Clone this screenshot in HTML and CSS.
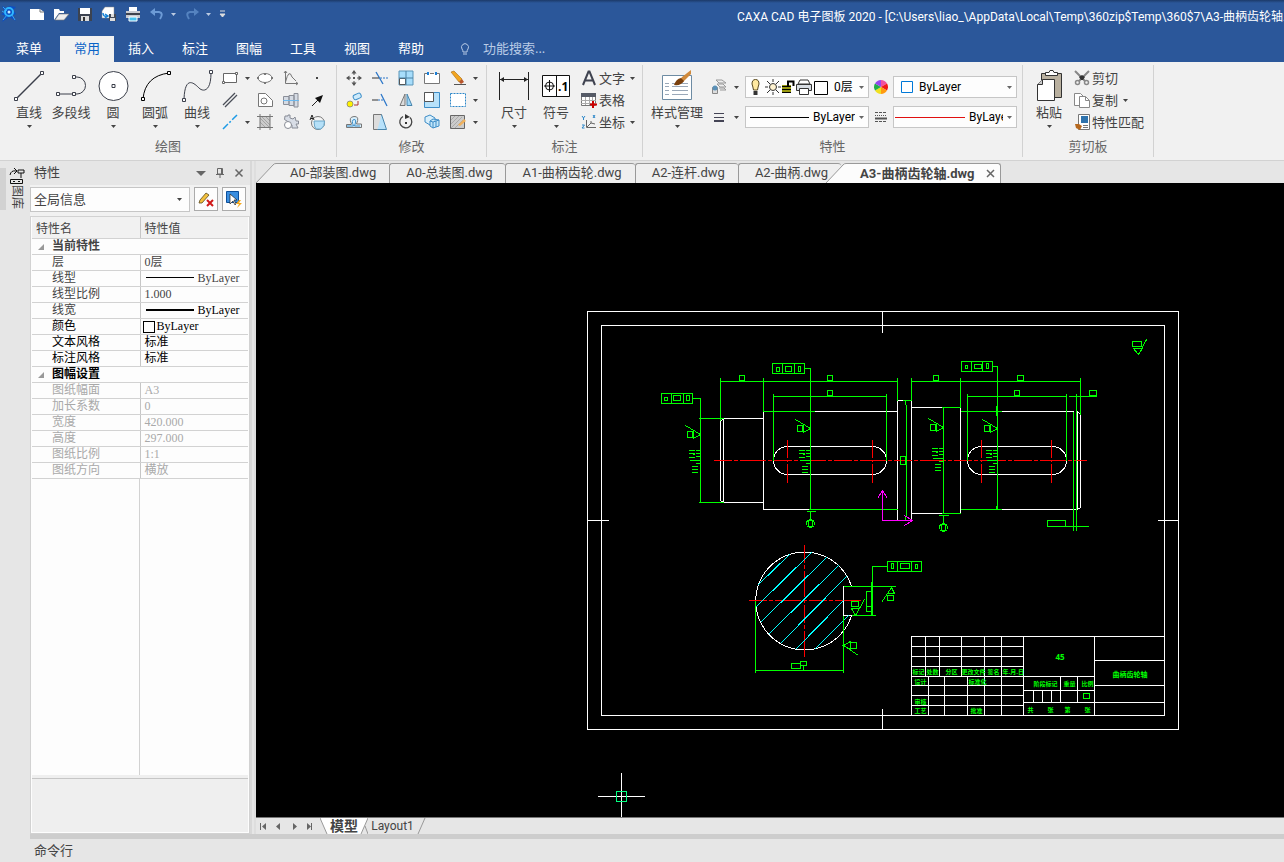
FILE: index.html
```html
<!DOCTYPE html>
<html lang="zh-CN">
  <head>
    <meta charset="UTF-8" />
    <meta name="viewport" content="width=device-width, initial-scale=1.0" />
    <title>CAXA CAD 电子图板 2020</title>
    <link rel="stylesheet" href="styles.css">
  </head>
  <body>
    <!-- 公用图形 -->
    <svg class="defs" width="0" height="0">
      <symbol id="arrow" viewBox="0 0 5 3"><path d="M0 0H5L2.5 3Z" fill="currentColor" /></symbol>
      <symbol id="rough" overflow="visible">
        <path d="M-15 -9L0 0M-7 -4V4L0 0M-13 -3H-8V3H-13Z" />
      </symbol>
      <symbol id="dimtext" overflow="visible">
        <path d="M-12 -10H-6M-12 -7H-6M-12 -3H-6M-8 -6H-6M-5 -10H0M-5 -7H0M-5 -4H0M-11 0H0M-5 3H0M-9 6H-3M-9 9H-3M-9 12H-3" />
      </symbol>
    </svg>

    <header class="top">
      <div class="titlebar flex">
        <div class="quick flex align">
          <svg class="logo" width="18" height="18" viewBox="0 0 18 18">
            <path d="M2 1L6 3 10 1 16 2 13 5 16 9 12 11 16 16 9 12 2 17 5 11 1 9 5 7Z" fill="#0b4fc4" />
            <circle cx="9" cy="7" r="4" fill="none" stroke="#2fb7ff" stroke-width="2" />
            <path d="M3 2L7 6M3 15L7 10M12 10L15 15M5 8L2 6" stroke="#36a3f5" fill="none" />
            <circle cx="9" cy="7" r="1.5" fill="#bfe8ff" />
          </svg>
          <button class="qbtn" aria-label="新建"><svg width="16" height="16" viewBox="0 0 16 16"><path d="M1 3H11L15 6V14H1Z" fill="#fff" /><path d="M11 3V6H15" fill="none" stroke="#777" /></svg></button>
          <button class="qbtn" aria-label="打开"><svg width="16" height="16" viewBox="0 0 16 16"><path d="M1 14V3H6L7 5H11V7H6Z" fill="#fff" /><path d="M2 14L6 8H16L11 14Z" fill="#eee" stroke="#777" stroke-width=".6" /></svg></button>
          <button class="qbtn" aria-label="保存"><svg width="16" height="16" viewBox="0 0 16 16"><path d="M1 2H15V15H1Z" fill="#3c4350" /><path d="M3 2H13V8H3Z" fill="#fff" /><path d="M4 10H12V15H4Z" fill="#ddd" /><path d="M6 11H8V15H6Z" fill="#333" /></svg></button>
          <button class="qbtn" aria-label="另存为"><svg width="16" height="16" viewBox="0 0 16 16"><path d="M4 1H13V12H1V5Z" fill="#fff" stroke="#888" stroke-width=".5" /><path d="M8 8H15V15H8Z" fill="#444b58" /><path d="M10 8H13V11H10ZM9 12H14V15H9Z" fill="#ddd" /><path d="M2 7Q2 11 6 10M4 8L7 10 4 12" fill="none" stroke="#1683d8" stroke-width="1.5" /></svg></button>
          <button class="qbtn" aria-label="打印"><svg width="16" height="16" viewBox="0 0 16 16"><path d="M4 1H12V5H4Z" fill="#fff" /><path d="M1 5H15V12H1Z" fill="#c9ccd2" /><path d="M1 7H15V9H1Z" fill="#3e434d" /><path d="M4 11H12V15H4Z" fill="#46c3f0" stroke="#fff" /></svg></button>
          <button class="qbtn" aria-label="撤销"><svg width="16" height="16" viewBox="0 0 16 16"><path d="M4 6H10Q15 7 11 13" fill="none" stroke="#6d9bd6" stroke-width="2" /><path d="M1 6L6 2V10Z" fill="#6d9bd6" /></svg></button>
          <svg class="qarrow" width="5" height="3"><use href="#arrow" /></svg>
          <button class="qbtn" aria-label="重做"><svg width="16" height="16" viewBox="0 0 16 16"><path d="M12 6H6Q1 7 5 13" fill="none" stroke="#5583c0" stroke-width="2" /><path d="M15 6L10 2V10Z" fill="#5583c0" /></svg></button>
          <svg class="qarrow" width="5" height="3"><use href="#arrow" /></svg>
          <svg class="qmore" width="7" height="8" viewBox="0 0 7 8"><path d="M1 1H6M1 4H6L3.500 7Z" stroke="#ddd" fill="#ddd" /></svg>
        </div>
        <h1 class="caption">CAXA CAD 电子图板 2020 - [C:\Users\liao_\AppData\Local\Temp\360zip$Temp\360$7\A3-曲柄齿轮轴.</h1>
      </div>
      <nav class="menu flex">
        <button>菜单</button>
        <button class="on">常用</button>
        <button>插入</button>
        <button>标注</button>
        <button>图幅</button>
        <button>工具</button>
        <button>视图</button>
        <button>帮助</button>
        <label class="search flex align">
          <svg width="12" height="14" viewBox="0 0 12 14"><path d="M4 10Q4 8 3 7A3.500 3.500 0 1 1 9 7Q8 8 8 10ZM4 12H8" fill="none" stroke="#b9cbe6" /></svg>
          <input type="text" placeholder="功能搜索..." aria-label="功能搜索" />
        </label>
      </nav>
    </header>

    <section class="ribbon flex">
      <div class="group draw">
        <div class="tools flex">
          <button class="big">
            <svg width="32" height="32"><path d="M3 29L29 3" stroke="#3b3f4a" stroke-width="1.5" /><path d="M1.500 27.500h3v3h-3zM27.500 1.500h3v3h-3z" fill="#fff" stroke="#3b3f4a" /></svg>
            <span>直线</span><svg class="arr" width="5" height="3"><use href="#arrow" /></svg>
          </button>
          <button class="big">
            <svg width="32" height="32"><path d="M3 24H19M19 7H22A8.500 8.500 0 0 1 22 24H19" fill="none" stroke="#3b3f4a" /><path d="M1.500 22.500h3v3h-3zM17.500 22.500h3v3h-3zM17.500 5.500h3v3h-3z" fill="#fff" stroke="#3b3f4a" /></svg>
            <span>多段线</span>
          </button>
          <button class="big">
            <svg width="32" height="32"><circle cx="16.500" cy="16" r="14.500" fill="#fff" stroke="#3b3f4a" /><path d="M15 14.500h3v3h-3z" fill="#fff" stroke="#3b3f4a" /></svg>
            <span>圆</span><svg class="arr" width="5" height="3"><use href="#arrow" /></svg>
          </button>
          <button class="big">
            <svg width="32" height="32"><path d="M4 29Q6 6 30 3" fill="none" stroke="#000" /><path d="M2.500 27.500h3v3h-3zM28.500 1.500h3v3h-3z" fill="#fff" stroke="#000" /></svg>
            <span>圆弧</span><svg class="arr" width="5" height="3"><use href="#arrow" /></svg>
          </button>
          <button class="big">
            <svg width="32" height="32"><path d="M3 29C4 4 14 14 18 18S30 22 30 3" fill="none" stroke="#3b3f4a" /><path d="M1.500 28.500h3v3h-3zM28.500 .5h3v3h-3z" fill="#fff" stroke="#3b3f4a" /></svg>
            <span>曲线</span><svg class="arr" width="5" height="3"><use href="#arrow" /></svg>
          </button>
          <div class="smalls draw-grid">
            <button class="sm" aria-label="矩形"><svg width="16" height="16"><path d="M1.500 3.500H14.500V12.500H1.500Z" fill="#fff" stroke="#666" /><path d="M.5 11.500h2v2h-2zM13.500 2.500h2v2h-2z" fill="#fff" stroke="#666" /></svg><svg class="arr" width="5" height="3"><use href="#arrow" /></svg></button>
            <button class="sm" aria-label="椭圆"><svg width="16" height="16"><ellipse cx="8" cy="8" rx="7" ry="4.500" fill="#fff" stroke="#777" /><path d="M0 7h2v2H0zM14 7h2v2h-2zM7 3h2v2H7zM7 12h2v2H7z" fill="#777" /></svg></button>
            <button class="sm" aria-label="公式曲线"><svg width="16" height="16"><path d="M2.500 1V13.500H15M2.500 12Q6 -2 9 7L13 11M1 3L2.500 1 4 3M13 12L15 13.500 13 15" fill="none" stroke="#777" /></svg></button>
            <button class="sm" aria-label="点"><svg width="16" height="16"><path d="M7 7h2v2H7z" fill="#444" /></svg></button>
            <button class="sm" aria-label="平行线"><svg width="16" height="16"><path d="M1 13L13 1M3 15L15 3" stroke="#4a4e58" stroke-width="1.300" /></svg></button>
            <button class="sm" aria-label="多边形"><svg width="16" height="16"><path d="M1.500 1.500H8.500L15.500 8.500V14.500H1.500Z" fill="#fff" stroke="#777" /><circle cx="7" cy="9" r="3" fill="none" stroke="#777" /></svg></button>
            <button class="sm" aria-label="轴"><svg width="16" height="16"><path d="M.5 4.500H6V12.500H.5ZM6 3.500H11V13.500H6ZM11 1.500H15V15H11Z" fill="#d5dbe4" stroke="#8a8e98" /><path d="M0 8.500H16" stroke="#6bb8ee" /></svg></button>
            <button class="sm" aria-label="箭头"><svg width="16" height="16"><path d="M3 14L9 8" stroke="#222" /><path d="M14 3L11 11 6 6Z" fill="#111" /></svg></button>
            <button class="sm" aria-label="中心线"><svg width="16" height="16"><path d="M1 15L15 1" stroke="#1d9be6" stroke-width="1.500" stroke-dasharray="7 2 2 2" /></svg><svg class="arr" width="5" height="3"><use href="#arrow" /></svg></button>
            <button class="sm" aria-label="剖面线"><svg width="16" height="16"><path d="M3 3H13V13H3Z" fill="#ccc" /><path d="M3 4L12 13M5 3L13 11M3 8L8 13M9 3L13 7" stroke="#999" fill="none" stroke-width=".8" /><path d="M3 0V16M13 0V16M0 2.500H16M0 13.500H16" stroke="#777" fill="none" /></svg></button>
            <button class="sm" aria-label="齿轮"><svg width="16" height="16"><path d="M1.500 5.500L2 2H5V1H7V4L10 5 12 3 13 7H15.500V10H13L15 14H9V11L4 7Z" fill="#d8dde6" stroke="#888c96" /><circle cx="5" cy="11" r="3.500" fill="#fff" stroke="#888c96" /></svg></button>
            <button class="sm" aria-label="局部放大"><svg width="16" height="16"><circle cx="9" cy="9" r="6.500" fill="#f5f5f5" stroke="#777" /><path d="M5 7H15.500Q16 12 12 15H7Q5 13 5 7Z" fill="#b5e0f8" stroke="#6aa6c8" /><path d="M1 6L3 1 5 6M2 4.500H4" fill="none" stroke="#222" /></svg></button>
          </div>
        </div>
        <div class="gname">绘图</div>
      </div>

      <div class="group modify">
        <div class="tools flex">
          <div class="smalls modify-grid">
            <button class="sm" aria-label="移动"><svg width="16" height="16"><path d="M8 1V5M8 11V15M1 8H5M11 8H15" stroke="#555" /><path d="M8 0L10.500 3.500H5.500ZM8 16L10.500 12.500H5.500ZM0 8L3.500 5.500V10.500ZM16 8L12.500 5.500V10.500ZM7 7h2v2H7z" fill="#555" /></svg></button>
            <button class="sm" aria-label="裁剪"><svg width="16" height="16"><path d="M4 2L11 14" stroke="#2a76c9" stroke-width="1.300" /><path d="M0 8H7" stroke="#333" /><path d="M8 8H16" stroke="#2a76c9" stroke-dasharray="2 1" /></svg></button>
            <button class="sm" aria-label="阵列"><svg width="16" height="16"><path d="M1 1H15V15H1Z" fill="#a7ddfb" stroke="#5b95b8" /><path d="M1.500 8.500H7.500V14.500H1.500Z" fill="#fff" stroke="#555" /><path d="M8 1V15M1 8H15" stroke="#4a80a3" /></svg></button>
            <button class="sm" aria-label="打断"><svg width="16" height="16"><path d="M4 3.500H.5V13.500H15.500V3.500H12M6 3.500H10" fill="#fff" stroke="#777" /><path d="M3 2h2v3H3zM11 2h2v3h-2z" fill="#1c7fd6" /></svg></button>
            <button class="sm" aria-label="删除"><svg width="16" height="16"><path d="M1 2L4 1 12 9 9 12Z" fill="#f2a51f" stroke="#a86a12" stroke-width=".6" /><path d="M9 12L12 9 14 12 11 14Z" fill="#b9562c" /><path d="M4 14.500H16" stroke="#555" /></svg></button>
            <svg class="arr" width="5" height="3"><use href="#arrow" /></svg>
            <button class="sm" aria-label="复制"><svg width="16" height="16"><circle cx="4" cy="12" r="3" fill="#fff200" stroke="#777" stroke-width=".7" /><rect x="7" y="2" width="8" height="5" rx="2" transform="rotate(-25 11 4)" fill="#cdeafb" stroke="#3d8fc9" /><path d="M8 13H12V9" fill="none" stroke="#a33" /></svg></button>
            <button class="sm" aria-label="延伸"><svg width="16" height="16"><path d="M9 2L15 14" stroke="#2a76c9" stroke-width="1.300" /><path d="M0 8H6" stroke="#333" /><path d="M6 8H11" stroke="#2a76c9" stroke-dasharray="2 1" /></svg></button>
            <button class="sm" aria-label="镜像"><svg width="16" height="16"><path d="M7 2V13.500H2Z" fill="#ddd" stroke="#777" /><path d="M9 2V13.500H14Z" fill="#9dd6f7" stroke="#4a86ad" /></svg></button>
            <button class="sm" aria-label="缩放"><svg width="16" height="16"><path d="M.5 .5H15.500V15.500H.5Z" fill="#b7e1fa" stroke="#3e8dc7" /><path d="M.5 .5H9.500V9.500H.5Z" fill="#fff" stroke="#555" /></svg></button>
            <button class="sm" aria-label="选择框"><svg width="16" height="16"><path d="M.5 1.500H15.500V14.500H.5Z" fill="#fff" stroke="#2a86c9" stroke-dasharray="2 1" /></svg></button>
            <svg class="arr" width="5" height="3"><use href="#arrow" /></svg>
            <button class="sm" aria-label="偏移"><svg width="16" height="16"><path d="M5.500 10Q2 3 8 2.500T10.500 10H15.500V13.500H.5V10.500H5.500" fill="#d9effb" stroke="#777" /><path d="M1 12H7.500Q5 6 8 5.500T8.500 12H14" stroke="#3d8fc9" fill="none" /></svg></button>
            <button class="sm" aria-label="拉伸"><svg width="16" height="16"><path d="M1.500 .5H9.500V15.500H1.500Z" fill="#ddd" stroke="#777" /><path d="M9.500 .5L14.500 15.500H5.500" fill="#b7e1fa" stroke="#4a86ad" /></svg></button>
            <button class="sm" aria-label="旋转"><svg width="16" height="16"><path d="M12 3.500A6 6 0 1 1 5 2.500" fill="none" stroke="#444" stroke-width="1.300" /><path d="M7 0V5L12 3Z" fill="#333" /><path d="M7 8h2v2H7z" fill="#333" /></svg></button>
            <button class="sm" aria-label="分解"><svg width="16" height="16"><path d="M1 3L6 1 11 4V9L6 11 1 8Z" fill="#d9effb" stroke="#3e8dc7" /><path d="M6 7L9 5 15 6V12L9 14 6 12ZM9 8V14M6 7L9 8 15 6M12 7V13" fill="#c2e6fa" stroke="#3e8dc7" /></svg></button>
            <button class="sm" aria-label="编辑填充"><svg width="16" height="16"><path d="M.5 1.500H14.500V14.500H.5Z" fill="#ccc" stroke="#666" /><path d="M1 6L5 2M1 10L9 2M1 14L12 3M5 14L13 6" stroke="#aaa" /><path d="M8 11L14 5 16 7 10 12Z" fill="#f0b25e" /></svg></button>
            <svg class="arr" width="5" height="3"><use href="#arrow" /></svg>
          </div>
        </div>
        <div class="gname">修改</div>
      </div>

      <div class="group note">
        <div class="tools flex">
          <button class="big">
            <svg width="32" height="32"><path d="M1.500 2V30M30.500 2V30M2 9.500H30" stroke="#222" /><path d="M2 9.500L6 7V12ZM30 9.500L26 7V12Z" fill="#222" /></svg>
            <span>尺寸</span><svg class="arr" width="5" height="3"><use href="#arrow" /></svg>
          </button>
          <button class="big">
            <svg width="32" height="32"><path d="M2.500 5.500H29.500V26.500H2.500Z" fill="#fff" stroke="#111" /><path d="M16.500 5V26M4 16H15M9.500 10V22" stroke="#111" /><circle cx="9.500" cy="16" r="4" fill="none" stroke="#111" /><text x="18" y="21" class="tolerance">.1</text></svg>
            <span>符号</span><svg class="arr" width="5" height="3"><use href="#arrow" /></svg>
          </button>
          <div class="lines">
            <button class="line"><svg width="16" height="16"><path d="M2 15L7.500 1.500H8.500L14 15M4 10.500H12" fill="none" stroke="#3f4350" stroke-width="2" /></svg><span>文字</span><svg class="arr" width="5" height="3"><use href="#arrow" /></svg></button>
            <button class="line"><svg width="16" height="16"><path d="M.5 1.500H14.500V13.500H.5Z" fill="#fff" stroke="#777" /><path d="M0 1H15V5H0Z" fill="#555a66" /><path d="M0 8.500H15M0 11.500H15M4.500 5V13M8.500 5V13M11.500 5V13" stroke="#aaa" /><path d="M12 9V16M9 12.500H16" stroke="#c00" stroke-width="2" /></svg><span>表格</span></button>
            <button class="line"><svg width="16" height="16"><path d="M5.500 6V13.500H15M6 13L10 9V7M10 9L14 10" fill="none" stroke="#666" /><path d="M1 2L2.500 4L4 2M2.500 4V6M12 1L14 4M14 1L12 4M1 11H3.500L1 14H3.500" fill="none" stroke="#2a86c9" /></svg><span>坐标</span><svg class="arr" width="5" height="3"><use href="#arrow" /></svg></button>
          </div>
        </div>
        <div class="gname">标注</div>
      </div>

      <div class="group props">
        <div class="tools flex">
          <button class="big wide">
            <svg width="32" height="32"><path d="M1.500 5.500H30.500V29.500H1.500Z" fill="#fff" stroke="#6d8ba3" /><path d="M4 13.500H8M4 16.500H8M4 20.500H8M4 24.500H8M11 13.500H27M11 16.500H27M11 20.500H27M11 24.500H27" stroke="#9aa8b8" /><path d="M30 0L21 7 18 11 22 12 30 4Z" fill="#d08a3c" /><path d="M20 8Q15 9 13 15Q20 16 23 11Z" fill="#7a3f0c" /></svg>
            <span>样式管理</span><svg class="arr" width="5" height="3"><use href="#arrow" /></svg>
          </button>
          <div class="prop-grid">
            <button class="sm left" aria-label="图层"><svg width="16" height="16"><path d="M5 1H11L15 4H8ZM6 5H12L15 8H9ZM8 9H13L15 11H9" fill="#eee" stroke="#999" /><path d="M1.500 8.500H6.500V14.500H1.500Z" fill="#ddd" stroke="#888" /><circle cx="4" cy="9" r="2.500" fill="#5b91b8" /></svg><svg class="arr" width="5" height="3"><use href="#arrow" /></svg></button>
            <div class="combo flex align">
              <svg class="layer-icons" width="80" height="18">
                <path d="M2 6A3.500 4.500 0 1 1 9 6Q8 9 7.500 12H3.500Q3 9 2 6Z" fill="#ffe9a0" stroke="#5a4a20" /><path d="M3.500 13H7.500V17H3.500Z" fill="#333" />
                <circle cx="23" cy="9" r="3.500" fill="#fff3d0" stroke="#333" /><path d="M23 1V4M23 14V17M15 9H18M28 9H31M17 3L20 6M26 12L29 15M29 3L26 6M20 12L17 15" stroke="#333" />
                <path d="M32 7H41V15H32Z" fill="#9a9a12" /><path d="M32 8.500H41M32 11.500H41M32 14.500H41" stroke="#000" /><path d="M38 8V3.500H43.500V8" fill="none" stroke="#000" stroke-width="2" />
                <path d="M50 2H58L60 6H48Z" fill="#fff" stroke="#333" /><path d="M46.500 6.500H61.500V12.500H46.500Z" fill="#d8dde3" stroke="#333" /><path d="M49.500 10.500H58.500V16.500H49.500Z" fill="#fff" stroke="#333" />
                <path d="M64.500 3.500H77.500V16.500H64.500Z" fill="#fff" stroke="#000" />
              </svg>
              <select aria-label="图层"><option>0层</option></select>
              <svg class="arr" width="5" height="3"><use href="#arrow" /></svg>
            </div>
            <svg class="mid" width="14" height="14" viewBox="-7 -7 14 14">
              <path d="M0 0L0 -7A7 7 0 0 1 6 -3.500Z" fill="#f050a0" /><path d="M0 0L6 -3.500A7 7 0 0 1 6 3.500Z" fill="#f01818" /><path d="M0 0L6 3.500A7 7 0 0 1 0 7Z" fill="#ff9a10" /><path d="M0 0L0 7A7 7 0 0 1 -6 3.500Z" fill="#f0e020" /><path d="M0 0L-6 3.500A7 7 0 0 1 -6 -3.500Z" fill="#22b04a" /><path d="M0 0L-6 -3.500A7 7 0 0 1 0 -7Z" fill="#9548f0" />
            </svg>
            <div class="combo flex align">
              <svg class="swatch" width="12" height="12"><path d="M.5 .5H11.500V11.500H.5Z" fill="#fff" stroke="#0078d7" /></svg>
              <select aria-label="颜色"><option>ByLayer</option></select>
              <svg class="arr" width="5" height="3"><use href="#arrow" /></svg>
            </div>
            <button class="sm left" aria-label="线宽"><svg width="16" height="16"><path d="M3 4.500H13M3 8.500H13" stroke="#445" /><path d="M3 12H13" stroke="#445" stroke-width="2" /></svg><svg class="arr" width="5" height="3"><use href="#arrow" /></svg></button>
            <div class="combo flex align">
              <i class="stroke"></i>
              <select aria-label="线宽"><option>ByLayer</option></select>
              <svg class="arr" width="5" height="3"><use href="#arrow" /></svg>
            </div>
            <svg class="mid" width="12" height="12"><path d="M0 1.500H12M0 10.500H12" stroke="#555" stroke-dasharray="3 1" /><path d="M0 4.500H12" stroke="#555" stroke-dasharray="1 1" /><path d="M0 7.500H12" stroke="#555" stroke-width="2" /></svg>
            <div class="combo flex align linetype">
              <i class="stroke red"></i>
              <select aria-label="线型"><option>ByLayer</option></select>
              <svg class="arr" width="5" height="3"><use href="#arrow" /></svg>
            </div>
          </div>
        </div>
        <div class="gname">特性</div>
      </div>

      <div class="group clip">
        <div class="tools flex">
          <button class="big">
            <svg width="32" height="32"><path d="M8.500 3.500H28.500V27.500H8.500Z" fill="#b9b09f" stroke="#333" /><path d="M12.500 5.500V2.500H16L17 .5H20L21 2.500H24.500V5.500Z" fill="#fff" stroke="#333" /><path d="M4.500 14.500L9.500 9.500H21.500V30.500H4.500Z" fill="#fff" stroke="#333" /><path d="M4.500 14.500H9.500V9.500" fill="#ccc" stroke="#333" /></svg>
            <span>粘贴</span><svg class="arr" width="5" height="3"><use href="#arrow" /></svg>
          </button>
          <div class="lines">
            <button class="line"><svg width="16" height="16"><path d="M1 1L11 11M15 1L5 11" stroke="#888" stroke-width="2" /><path d="M5 7L8 5 11 7 9 10H7Z" fill="#333" /><circle cx="3.500" cy="12.500" r="2" fill="none" stroke="#888" stroke-width="1.500" /><circle cx="12.500" cy="12.500" r="2" fill="none" stroke="#888" stroke-width="1.500" /></svg><span>剪切</span></button>
            <button class="line"><svg width="16" height="16"><path d="M.5 1.500H6.500L9.500 4.500V13.500H.5Z" fill="#fff" stroke="#888" /><path d="M5.500 4.500H11.500L15.500 8.500V15.500H5.500Z" fill="#fff" stroke="#888" /><path d="M11.500 4.500V8.500H15.500" fill="none" stroke="#888" /></svg><span>复制</span><svg class="arr" width="5" height="3"><use href="#arrow" /></svg></button>
            <button class="line"><svg width="16" height="16"><path d="M4.500 .5H15.500V15.500H4.500Z" fill="#fff" stroke="#777" /><path d="M7 2H14V9H7Z" fill="#2f73ad" /><path d="M9 11.500H14M9 13.500H14" stroke="#777" /><path d="M1 10L5 10 8 12 6 16 2 14Z" fill="#b5681e" /></svg><span>特性匹配</span></button>
          </div>
        </div>
        <div class="gname">剪切板</div>
      </div>
    </section>

    <main class="work flex">
      <div class="dock">
        <button class="docktab">
          <svg width="16" height="17"><path d="M1 7Q2 2 7 3M5 0L8 3 5 6M9 2H15V5H9ZM12 5V10M1.500 11.500H13.500V15.500H1.500Z" fill="none" stroke="#111" /><path d="M4 13.500H6M9 13.500H11" stroke="#111" /></svg>
          <span>图库</span>
        </button>
      </div>

      <div class="side flex column">
        <aside class="panel flex column">
          <div class="panel-head flex align">
            <h2>特性</h2>
            <button aria-label="菜单"><svg width="10" height="10"><path d="M0 3H10L5 8Z" fill="#666" /></svg></button>
            <button aria-label="固定"><svg width="10" height="10"><path d="M2.500 .5H7.500V6H2.500ZM1 6.500H9M5 7V10" fill="none" stroke="#666" /><path d="M6.500 1V6" stroke="#666" /></svg></button>
            <button aria-label="关闭"><svg width="10" height="10"><path d="M1.500 1.500L8.500 8.500M8.500 1.500L1.500 8.500" stroke="#666" stroke-width="1.500" /></svg></button>
          </div>
          <div class="panel-bar flex">
            <div class="picker flex align">
              <select aria-label="对象"><option>全局信息</option></select>
              <svg class="arr" width="5" height="3"><use href="#arrow" /></svg>
            </div>
            <button class="tool" aria-label="取消选择"><svg width="18" height="18"><path d="M2 13L3 10 9 3 12 5 5 13Z" fill="#f3c03c" stroke="#5a4a20" stroke-width=".8" /><path d="M10 10L16 16M16 10L10 16" stroke="#d01818" stroke-width="2" /></svg></button>
            <button class="tool" aria-label="快速选择"><svg width="18" height="18"><path d="M1.500 1.500H13.500V12.500H1.500Z" fill="#3a8ee0" stroke="#0b4f9c" /><path d="M5 4V14L8 11 10 15 11 14 9 10H12Z" fill="#fff" stroke="#222" stroke-width=".7" /><path d="M14 10L11 14H14L12 18 17 13H14L16 10Z" fill="#f5a81c" /></svg></button>
          </div>
          <div class="sheet flex column">
            <table>
              <thead><tr><th>特性名</th><th>特性值</th></tr></thead>
              <tbody>
                <tr class="sec"><th colspan="2"><svg width="6" height="6"><path d="M6 0V6H0Z" fill="#999" /></svg>当前特性</th></tr>
                <tr><td>层</td><td>0层</td></tr>
                <tr><td>线型</td><td><i class="thin"></i>ByLayer</td></tr>
                <tr><td>线型比例</td><td>1.000</td></tr>
                <tr><td>线宽</td><td class="ink"><i class="thick"></i>ByLayer</td></tr>
                <tr class="ink"><td>颜色</td><td class="color"><i class="box"></i>ByLayer</td></tr>
                <tr class="ink"><td>文本风格</td><td>标准</td></tr>
                <tr class="ink"><td>标注风格</td><td>标准</td></tr>
                <tr class="sec ink"><th colspan="2"><svg width="6" height="6"><path d="M6 0V6H0Z" fill="#999" /></svg>图幅设置</th></tr>
                <tr class="off"><td>图纸幅面</td><td>A3</td></tr>
                <tr class="off"><td>加长系数</td><td>0</td></tr>
                <tr class="off"><td>宽度</td><td>420.000</td></tr>
                <tr class="off"><td>高度</td><td>297.000</td></tr>
                <tr class="off"><td>图纸比例</td><td>1:1</td></tr>
                <tr class="off"><td>图纸方向</td><td>横放</td></tr>
              </tbody>
            </table>
            <div class="blank flex"><div></div></div>
            <div class="tip"></div>
          </div>
        </aside>
      </div>

      <div class="split"></div>

      <div class="doc flex column">
        <div class="doctabs flex">
          <svg class="slant" width="20" height="20"><path d="M0 20L17 2Q18 .5 20 .5V20Z" fill="#efefef" /><path d="M0 20L17 2Q18 .5 20 .5" fill="none" stroke="#999" /></svg>
          <button class="first">A0-部装图.dwg</button>
          <button>A0-总装图.dwg</button>
          <button>A1-曲柄齿轮.dwg</button>
          <button>A2-连杆.dwg</button>
          <button>A2-曲柄.dwg</button>
          <svg class="slant cur" width="20" height="20"><path d="M0 20L17 2Q18 .5 20 .5V20Z" fill="#fcfcfc" /><path d="M0 20L17 2Q18 .5 20 .5" fill="none" stroke="#999" /></svg>
          <button class="first cur">A3-曲柄齿轮轴.dwg<svg width="9" height="9"><path d="M1 1L8 8M8 1L1 8" stroke="#666" stroke-width="1.500" /></svg></button>
        </div>

        <svg class="canvas">
          <g transform="translate(-255.500 -182.500)" fill="none" shape-rendering="crispEdges">
            <!-- 图框 -->
            <g stroke="#fff">
              <path d="M587 311H1178V729H587ZM601 325H1164V715H601ZM882 311V332M882 708V729M587 520H608M1157 520H1178" />
              <!-- 轴 -->
              <path d="M723 418L720 421V500L723 502ZM723 418H763M723 502H763M763 411V509M814 411H897M763 509H808M897 400V520M897 400H902M911 400V520M911 407H941M911 513H941M960 407V513M1001 411H1073M1001 509H1077M1077 411V509M1077 411L1080 414V507L1077 509" />
              <rect x="773" y="446" width="113" height="28" rx="14" />
              <rect x="967" y="446" width="99" height="28" rx="14" />
              <!-- 剖面 -->
              <path d="M851 586H843V615H851M851 586A49 49 0 1 0 851 615" />
              <!-- 标题栏 -->
              <path d="M911 715V636H1164M925 636V676M939 636V676M961 636V676M984 636V715M1001 636V715M1023 636V715M1094 636V715M928 676V715M944 676V715M967 676V715" />
              <path d="M911 646H1023M911 656H1023M911 666H1023M911 676H1094M911 685H1023M911 695H1023M911 705H1023M1023 690H1094M1023 702H1164M1060 676V702M1077 676V702M1033 690V702M1042 690V702M1051 690V702M1094 660H1164M1094 685H1164" />
              <!-- 十字光标 -->
              <path d="M597 796H644M621 772V817" />
            </g>
            <path d="M616 791H626V801H616Z" stroke="#00ff80" />
            <g stroke="#f00">
              <path d="M713 460H1086M748 600H861M804 544V658" stroke-dasharray="18 2 4 2 26 2 4 2" />
              <path d="M787 439V482M872 439V482M981 439V482M1051 439V482" stroke-dasharray="18 2 2 2 20" />
            </g>
            <path stroke="#0ff" d="M757 585L789 554M755 607L811 552M760 622L826 557M768 634L838 565M780 643L846 576M795 649L843 600M814 649L848 615" />
            <g stroke="#0f0">
              <path d="M720 381H897M911 381H1080M720 377V420M763 377V411M897 377V400M911 377V400M960 377V407M1080 377V414" />
              <path d="M773 396H886M773 393V460M886 393V460M967 396H1066M967 393V460M1066 393V460M1068 396H1096M763 411H814M808 509H897M902 400H911M941 407H960M941 513H960M960 411H1001M960 509H1001" />
              <path d="M739 375H744V380H739ZM827 375H832V380H827ZM933 375H938V380H933ZM1017 375H1023V380H1017ZM827 390H832V395H827ZM1014 390H1019V395H1014ZM1089 390H1096V395H1089Z" />
              <path d="M772 363H804V373H772ZM782 363V373M794 363V373M776 367H779V371H776ZM785 366H791V371H785ZM798 366H800V371H798ZM804 368H810V509" />
              <path d="M961 361H992V371H961ZM971 361V371M982 361V371M965 365H967V368H965ZM974 364H981V368H974ZM986 363H988V368H986ZM992 366H997V509M996 405V415M996 505V509" />
              <path d="M661 393H692V403H661ZM671 393V403M683 393V403M664 397H667V400H664ZM673 395H680V400H673ZM686 395H689V400H686ZM692 398H700V502M698 418H723M698 502H723" />
              <path d="M806 511H815M810 511V519M808 520H812V526H808ZM943 407V513M938 515H948M943 515V523M941 524H945V530H941Z" />
              <circle cx="810" cy="523" r="4" /><circle cx="943" cy="527" r="4" />
              <path d="M900 456H905V464H900ZM906 404V516M905 400V404M905 516V520M1073 411V530M1076 393V530M1047 520H1065V526H1047ZM1065 526H1088" />
              <path d="M1132 341H1141V346H1132ZM1133 348H1142L1138 354ZM1138 354L1146 339" />
              <path d="M755 600V672M843 615V672M755 670H843M791 663H800V668H791ZM800 661H806V665H800ZM803 665V670" />
              <path d="M887 561H921V571H887ZM897 561V571M911 561V571M891 563H893V568H891ZM900 563H909V568H900ZM915 564H917V568H915ZM887 566H872V615M871 581V615M843 586H895M851 615H875M866 591H871V611H866ZM866 606H871" />
              <path d="M851 601H858V606H851ZM851 608H859L855 615ZM855 615L864 599M887 595H893V600H887ZM887 593H894L891 587ZM891 587L881 602M850 642H856V648H850ZM843 645L850 641V649ZM843 645L858 655M1083 693H1089V698H1083Z" />
              <use href="#rough" x="700" y="434" /><use href="#rough" x="810" y="428" /><use href="#rough" x="943" y="427" /><use href="#rough" x="997" y="428" />
              <use href="#dimtext" x="700" y="460" /><use href="#dimtext" x="810" y="460" /><use href="#dimtext" x="943" y="458" /><use href="#dimtext" x="997" y="460" />
            </g>
            <path stroke="#f0f" d="M882 490V520H912M877 498L882 490 887 498M904 515L912 520 904 525" />
            <g class="block-text">
              <text x="912" y="673">标记</text><text x="926" y="673">处数</text><text x="945" y="673">分区</text><text x="961" y="673">更改文件</text><text x="987" y="673">签名</text><text x="1002" y="673">年.月.日</text>
              <text x="914" y="683">设计</text><text x="968" y="683">标准化</text><text x="914" y="703">审核</text><text x="914" y="712">工艺</text><text x="970" y="712">批准</text>
              <text x="1033" y="685">阶段标记</text><text x="1063" y="685">重量</text><text x="1081" y="685">比例</text>
              <text x="1027" y="711">共</text><text x="1047" y="711">张</text><text x="1064" y="711">第</text><text x="1084" y="711">张</text>
              <text x="1055" y="659" class="l">45</text><text x="1112" y="676" class="m">曲柄齿轮轴</text>
            </g>
          </g>
        </svg>

        <div class="sheets flex">
          <svg class="nav" width="64" height="16"><path d="M4.500 5V12M55.500 5V12" stroke="#666" /><path d="M10 5V12L6 8.500ZM24 5V12L20 8.500ZM37 5V12L41 8.500ZM51 5V12L55 8.500Z" fill="#666" /></svg>
          <svg width="8" height="16"><path d="M0 0L7 16H8V0Z" fill="#fff" /><path d="M0 0L7 16" stroke="#999" /></svg>
          <button class="model">模型</button>
          <svg width="8" height="16"><path d="M8 0L1 16H0V0Z" fill="#fff" /><path d="M8 0L1 16M5 8L8 16" stroke="#999" /></svg>
          <button class="layout">Layout1</button>
          <svg width="9" height="16"><path d="M8 0L1 16" stroke="#999" /></svg>
        </div>
      </div>
    </main>

    <footer class="command">命令行</footer>
  </body>
</html>
```
FILE: styles.css
```css
* {
  margin: 0;
  padding: 0;
  box-sizing: border-box;
}
body {
  display: flex;
  flex-direction: column;
  height: 100vh;
  overflow: hidden;
  background-color: #e6e6e6;
  color: #444;
  font-family: "Open Sans", "Noto Sans CJK SC", sans-serif;
  font-size: 13px;
}
button,
select,
input {
  font: inherit;
  color: inherit;
  border: none;
  background: none;
}
select {
  appearance: none;
  outline: none;
}
svg {
  display: block;
  flex: none;
}
.defs {
  position: absolute;
}
.flex {
  display: flex;
}
.align {
  align-items: center;
}
.column {
  flex-direction: column;
}

/* 标题栏 */
.top {
  background-color: #2b579a;
  background-image: linear-gradient(#1c3a69, #2b579a 3px);
  color: #fff;
}
.titlebar {
  height: 36px;
}
.quick {
  width: 57.4%;
  height: 28px;
  flex: none;
}
.quick .logo {
  margin-right: 9px;
}
.qbtn {
  width: 16px;
  height: 16px;
  margin: 0 6px 0 2px;
}
.qarrow {
  margin-right: 6px;
  color: #bccbe2;
}
.qmore {
  margin-left: 2px;
}
.caption {
  flex: 1;
  font-family: Roboto, "Noto Sans CJK SC", sans-serif;
  font-size: 12px;
  font-weight: normal;
  line-height: 34px;
  white-space: nowrap;
  overflow: hidden;
}

.menu {
  height: 26px;
  padding-left: 6px;
}
.menu button {
  width: 54px;
  height: 26px;
  padding-bottom: 2px;
  line-height: 22px;
}
.menu button:first-child {
  width: 46px;
  margin-right: 8px;
}
.menu .on {
  background-color: #f1f1f1;
  color: #0a64c8;
}
.search {
  margin-left: 21px;
  gap: 12px;
}
.search input {
  width: 120px;
  height: 24px;
  padding-bottom: 2px;
  outline: none;
}
.search input::placeholder {
  color: #b9cbe6;
}

/* 功能区 */
.ribbon {
  height: 99px;
  padding-top: 3px;
  background-color: #f1f1f1;
  border-bottom: 1px solid #d2d2d2;
}
.group {
  height: 92px;
  border-right: 1px solid #d2d2d2;
}
.tools {
  height: 70px;
  padding-top: 2px;
}
.gname {
  line-height: 23px;
  text-align: center;
  color: #666;
}
.draw {
  width: 337px;
}
.draw .tools {
  padding-left: 8px;
}
.modify {
  width: 150px;
}
.modify .tools {
  padding-left: 4px;
}
.note {
  width: 156px;
}
.note .tools {
  padding-left: 6px;
}
.props {
  width: 380px;
}
.props .tools {
  padding-left: 6px;
}
.clip {
  width: 131px;
}
.clip .tools {
  padding-left: 5px;
}
.big {
  display: flex;
  flex-direction: column;
  align-items: center;
  width: 42px;
  padding-top: 3px;
  white-space: nowrap;
}
.big span {
  line-height: 20px;
}
.big .arr {
  margin-top: 3px;
}
.wide {
  width: 56px;
}
.arr {
  color: #444;
}
.tolerance {
  font-size: 12px;
  font-weight: bold;
}
.smalls {
  display: grid;
  grid-auto-rows: 22px;
  align-items: center;
  justify-items: center;
}
.draw-grid {
  grid-template-columns: 35px 26px 26px 26px;
  justify-items: start;
  padding-left: 4px;
}
.modify-grid {
  grid-template-columns: repeat(5, 26px) 9px;
}
.sm {
  display: flex;
  align-items: center;
  gap: 7px;
}
.lines {
  display: flex;
  flex-direction: column;
  padding-left: 4px;
}
.line {
  display: flex;
  align-items: center;
  gap: 2px;
  height: 22px;
  white-space: nowrap;
}
.line span {
  padding-bottom: 2px;
}
.line .arr {
  margin-left: 3px;
}
.prop-grid {
  display: grid;
  grid-template-columns: 40px 124px 24px 124px;
  grid-auto-rows: 22px;
  row-gap: 8px;
  align-items: center;
  align-content: start;
  padding-top: 9px;
}
.prop-grid .left {
  justify-self: center;
}
.prop-grid .mid {
  justify-self: center;
}
.combo {
  height: 22px;
  padding: 0 4px;
  gap: 4px;
  border: 1px solid #c6c6c6;
  background-color: #fdfdfd;
  color: #000;
  font-family: Roboto, "Noto Sans CJK SC", sans-serif;
  font-size: 12px;
}
.combo select {
  flex: 1;
  min-width: 0;
  height: 18px;
}
.combo .arr {
  color: #666;
}
.swatch {
  margin: 0 2px 0 3px;
}
.stroke {
  flex: none;
  width: 59px;
  height: 1px;
  background-color: #000;
}
.linetype {
  padding-left: 1px;
}
.combo .red {
  width: 70px;
  background-color: #e01010;
}

/* 左侧 */
.work {
  flex: 1;
  min-height: 0;
}
.dock {
  width: 30px;
  padding-top: 7px;
}
.docktab {
  display: flex;
  flex-direction: column;
  align-items: center;
  width: 28px;
  height: 42px;
  border-left: 6px solid #d2d2d2;
}
.docktab span {
  writing-mode: vertical-rl;
  text-orientation: sideways;
  font-size: 12px;
  line-height: 16px;
}
.side {
  width: 220px;
}
.panel {
  flex: 1;
  min-height: 0;
}
.panel-head {
  height: 24px;
  padding: 0 6px 0 4px;
  gap: 9px;
}
.panel-head h2 {
  flex: 1;
  padding-bottom: 3px;
  font-size: 13px;
  font-weight: normal;
}
.panel-bar {
  height: 31px;
  padding-top: 2px;
  gap: 4px;
  background-color: #f1f1f1;
}
.picker {
  width: 160px;
  height: 25px;
  padding: 0 7px 0 3px;
  border: 1px solid #c6c6c6;
  background-color: #fdfdfd;
}
.picker select {
  flex: 1;
  padding-bottom: 2px;
}
.tool {
  display: flex;
  align-items: center;
  justify-content: center;
  width: 24px;
  height: 24px;
  border: 1px solid #ababab;
  background-color: #fdfdfd;
}
.sheet {
  flex: 1;
  min-height: 0;
  padding: 0 1px;
  border: 1px solid #d2d2d2;
  background-color: #fdfdfd;
  font-family: "Liberation Serif", "Noto Sans CJK SC", serif;
  font-size: 12px;
}
table {
  width: 100%;
  table-layout: fixed;
  border-collapse: collapse;
}
table tr {
  height: 16px;
}
table td,
table th {
  height: 16px;
  line-height: 15px;
  text-align: left;
  border-bottom: 1px solid #d2d2d2;
  white-space: nowrap;
}
table thead th {
  height: 21px;
  padding: 4px 0 0 4px;
  line-height: 16px;
  font-weight: normal;
  background-color: #f1f1f1;
}
table thead th:first-child,
table td:first-child {
  width: 50%;
  border-right: 1px solid #c6c6c6;
}
table td {
  padding-left: 4px;
}
table td:first-child {
  padding-left: 20px;
}
.sec th {
  padding-left: 6px;
}
.sec svg {
  display: inline-block;
  margin-right: 8px;
}
.ink {
  color: #000;
}
.off {
  color: #a9a9a9;
}
.thin,
.thick {
  display: inline-block;
  width: 48px;
  height: 1px;
  margin: 0 4px 4px 1px;
  background-color: #000;
}
.thick {
  height: 2px;
  margin-bottom: 3px;
}
table .color {
  padding-left: 2px;
}
.box {
  display: inline-block;
  width: 12px;
  height: 12px;
  margin-right: 2px;
  border: 1px solid #000;
  vertical-align: middle;
}
.blank {
  flex: 1;
}
.blank div {
  width: 50%;
  border-right: 1px solid #d2d2d2;
}
.tip {
  height: 57px;
  margin-bottom: 1px;
  padding-top: 3px;
  background-color: #efefef;
}
.tip::before {
  content: "";
  display: block;
  height: 1px;
  background-color: #c6c6c6;
}
.split {
  width: 6px;
  border-left: 2px solid #d8d8d8;
  border-right: 2px solid #dedede;
}

/* 绘图区 */
.doc {
  flex: 1;
  min-width: 0;
}
.doctabs {
  height: 22px;
  padding-top: 2px;
}
.doctabs button {
  display: flex;
  height: 20px;
  padding: 0 13px 0 16px;
  line-height: 18px;
  font-family: Roboto, "Noto Sans CJK SC", sans-serif;
  font-size: 13px;
  white-space: nowrap;
  border: 1px solid #999;
  border-width: 1px 0 0 1px;
  border-radius: 3px 3px 0 0;
  background-color: #efefef;
}
.doctabs .first {
  border-left: none;
  border-radius: 0;
}
.doctabs .slant + .first {
  padding-left: 14px;
}
.slant.cur {
  margin-left: -15px;
  z-index: 1;
}
.doctabs .cur {
  align-items: center;
}
.doctabs button.cur {
  padding-right: 5px;
  gap: 12px;
  font-weight: bold;
  background-color: #fcfcfc;
  border-right: 1px solid #999;
  border-radius: 0 3px 0 0;
}
.canvas {
  flex: 1;
  width: 100%;
  min-height: 0;
  background-color: #000;
}
.block-text {
  fill: #0f0;
  font-size: 6px;
  font-weight: bold;
}
.block-text .l {
  font-size: 8px;
}
.block-text .m {
  font-size: 7px;
}
.sheets {
  height: 17px;
  border-top: 1px solid #777;
}
.sheets button {
  height: 16px;
  line-height: 14px;
  font-family: Roboto, "Noto Sans CJK SC", sans-serif;
  font-size: 12px;
}
.sheets .model {
  width: 32px;
  font-size: 14px;
  font-weight: bold;
  background-color: #fff;
}
.sheets .layout {
  width: 49px;
}

.command {
  height: 28px;
  margin-left: 30px;
  padding-left: 4px;
  line-height: 22px;
  border-top: 5px solid #cdcdcd;
}
```
